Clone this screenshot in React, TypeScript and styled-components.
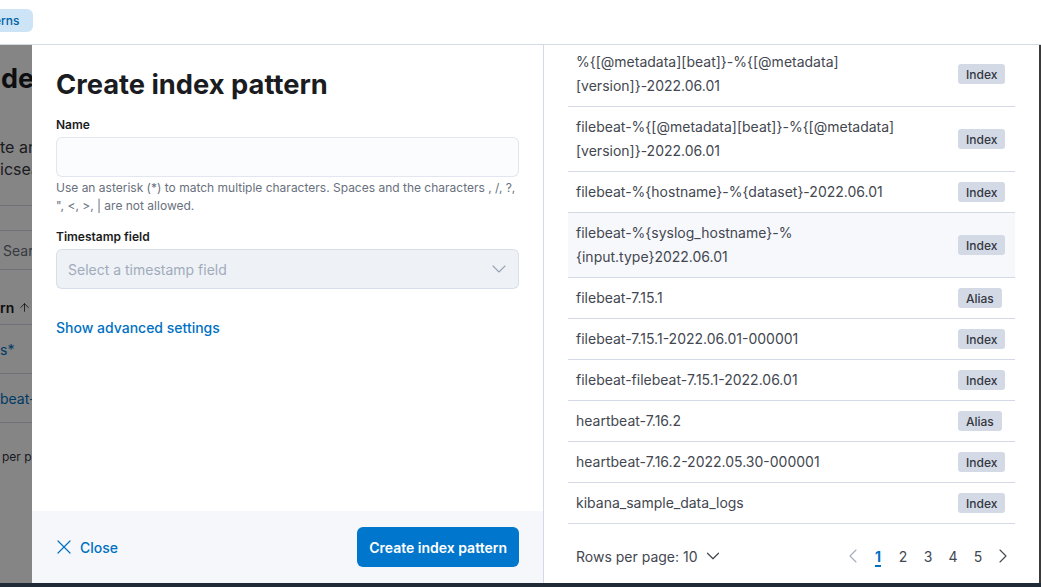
import React from "react";
import styled, { createGlobalStyle } from "styled-components";
import { X, ChevronDown, ChevronLeft, ChevronRight, ArrowUp } from "lucide-react";

const GlobalStyle = createGlobalStyle`
  html, body { margin: 0; padding: 0; height: 100%; }
  body {
    font-family: Inter, "Noto Sans", "Liberation Sans", sans-serif;
    background: #ffffff;
    color: #343741;
    overflow: hidden;
    -webkit-font-smoothing: antialiased;
  }
  #root { height: 100%; }
  * { box-sizing: border-box; }
`;

const Shell = styled.div`
  display: grid;
  grid-template-rows: 45px 1fr 4px;
  height: 100vh;
`;

const Header = styled.header`
  display: flex;
  align-items: center;
  border-bottom: 1px solid #d3dae6;
  background: #ffffff;
  overflow: hidden;
`;

const Crumb = styled.span`
  display: inline-flex;
  align-items: center;
  height: 23px;
  margin-top: -3px;
  margin-left: -6px;
  padding: 0 13px 0 0;
  background: #cce4f5;
  color: #0061a6;
  font-size: 12px;
  font-weight: 500;
  border-radius: 0 6px 6px 0;
`;

const Main = styled.main`
  position: relative;
  overflow: hidden;
`;

const BottomBar = styled.div`
  background: #1f2a36;
`;

/* ---------- page behind the mask ---------- */
const BgPage = styled.div`
  display: flex;
  flex-direction: column;
  width: 32px;
  overflow: hidden;
  white-space: nowrap;
`;

const BgTitle = styled.div`
  margin-top: 14px;
  margin-left: 1px;
  font-size: 27px;
  line-height: 40px;
  font-weight: 700;
  color: #1a1c21;
`;

const BgText = styled.div<{ $first?: boolean }>`
  font-size: 16px;
  line-height: 22px;
  color: #343741;
  margin-top: ${(p) => (p.$first ? "37px" : "0")};
`;

const BgRule = styled.div`
  margin-top: 25px;
  border-top: 1px solid #d3dae6;
`;

const BgSearch = styled.div`
  margin-top: 24px;
  height: 40px;
  border-top: 1px solid #d3dae6;
  border-bottom: 1px solid #d3dae6;
  display: flex;
  align-items: center;
  padding-left: 3px;
  font-size: 14px;
  color: #69707d;
`;

const BgHead = styled.div`
  margin-top: 21px;
  height: 34px;
  display: flex;
  align-items: center;
  gap: 4px;
  font-size: 14px;
  font-weight: 600;
  color: #1a1c21;
  border-bottom: 1px solid #d3dae6;
`;

const BgRow = styled.div`
  height: 49px;
  display: flex;
  align-items: center;
  font-size: 14px;
  color: #0071c2;
  border-bottom: 1px solid #d3dae6;
`;

const BgFoot = styled.div`
  margin-top: 26px;
  font-size: 12px;
  line-height: 16px;
  color: #343741;
  padding-left: 2px;
`;

const Mask = styled.div`
  position: absolute;
  inset: 0;
  background: rgba(0, 0, 0, 0.48);
`;

/* ---------- flyout ---------- */
const Flyout = styled.section`
  position: absolute;
  top: 0;
  bottom: 0;
  left: 32px;
  right: 0;
  display: grid;
  grid-template-columns: 512px 1fr;
  background: #ffffff;
  border-right: 2px solid #3a3a3a;
`;

const LeftPane = styled.div`
  display: flex;
  flex-direction: column;
  border-right: 1px solid #d3dae6;
  min-height: 0;
`;

const Body = styled.div`
  flex: 1;
  display: flex;
  flex-direction: column;
  padding: 20px 24px 0;
`;

const Title = styled.h2`
  margin: 0;
  font-size: 27.3px;
  line-height: 40px;
  font-weight: 700;
  color: #1a1c21;
`;

const Label = styled.label<{ $gap: number }>`
  display: block;
  margin-top: ${(p) => p.$gap}px;
  font-size: 12px;
  line-height: 16px;
  font-weight: 600;
  color: #1a1c21;
`;

const TextInput = styled.input`
  margin-top: 4px;
  height: 40px;
  width: 100%;
  border: none;
  border-radius: 6px;
  background: #fbfcfd;
  box-shadow: inset 0 0 0 1px rgba(17, 43, 134, 0.1);
  padding: 0 12px;
  font: inherit;
  font-size: 14px;
  outline: none;
`;

const Help = styled.div`
  margin-top: 2px;
  font-size: 12px;
  line-height: 18px;
  color: #69707d;
`;

const SelectBox = styled.div`
  margin-top: 4px;
  height: 40px;
  display: flex;
  align-items: center;
  justify-content: space-between;
  padding: 0 8px 0 12px;
  border-radius: 6px;
  background: #eef2f7;
  box-shadow: inset 0 0 0 1px rgba(17, 43, 134, 0.1);
  font-size: 14px;
  color: #a2abba;
`;

const LinkButton = styled.button`
  align-self: flex-start;
  margin-top: 29px;
  padding: 0;
  border: none;
  background: none;
  font: inherit;
  font-size: 14px;
  line-height: 20px;
  font-weight: 500;
  color: #0071c2;
  cursor: pointer;
`;

const Footer = styled.div`
  display: flex;
  align-items: center;
  justify-content: space-between;
  padding: 16px 24px;
  background: #f5f7fa;
`;

const EmptyButton = styled.button`
  display: inline-flex;
  align-items: center;
  gap: 4px;
  height: 40px;
  margin-left: -4px;
  padding: 0;
  border: none;
  background: none;
  font: inherit;
  font-size: 14px;
  font-weight: 500;
  color: #0071c2;
`;

const PrimaryButton = styled.button`
  height: 40px;
  padding: 0 12px;
  border: none;
  border-radius: 6px;
  background: #0077cc;
  color: #ffffff;
  font: inherit;
  font-size: 14px;
  font-weight: 600;
`;

/* ---------- right pane ---------- */
const RightPane = styled.div`
  display: flex;
  flex-direction: column;
  padding: 0 24px;
  overflow: hidden;
  min-height: 0;
`;

const Table = styled.div`
  display: flex;
  flex-direction: column;
  margin-top: -3px;
`;

const Row = styled.div<{ $hover?: boolean }>`
  display: grid;
  grid-template-columns: 1fr 65px;
  align-items: center;
  border-bottom: 1px solid #d3dae6;
  background: ${(p) => (p.$hover ? "#f7f8fc" : "transparent")};
`;

const NameCell = styled.div`
  padding: 8px;
  font-size: 14px;
  line-height: 24px;
  color: #434750;
`;

const TypeCell = styled.div`
  padding: 8px;
  display: flex;
`;

const Badge = styled.span`
  display: inline-flex;
  align-items: center;
  height: 20px;
  padding: 0 8px;
  border-radius: 3px;
  background: #d3dae6;
  color: #343741;
  font-size: 12px;
  font-weight: 500;
`;

const PagerBar = styled.div`
  display: flex;
  align-items: center;
  justify-content: space-between;
  padding: 20px 0 0 8px;
`;

const RowsPer = styled.div`
  display: flex;
  align-items: center;
  gap: 4px;
  height: 24px;
  font-size: 14px;
  color: #434750;
`;

const Pages = styled.div`
  display: flex;
  align-items: center;
  gap: 1px;
`;

const PageItem = styled.span<{ $active?: boolean; $disabled?: boolean }>`
  width: 24px;
  height: 24px;
  display: inline-flex;
  align-items: center;
  justify-content: center;
  font-size: 14px;
  font-weight: ${(p) => (p.$active ? 700 : 400)};
  color: ${(p) => (p.$active ? "#0071c2" : p.$disabled ? "#a2abba" : "#434750")};
  text-decoration: ${(p) => (p.$active ? "underline" : "none")};
  text-decoration-thickness: 1.5px;
  text-underline-offset: 3px;
`;

type Item = { name: React.ReactNode; type: "Index" | "Alias"; hover?: boolean };

const items: Item[] = [
  { name: <>%{"{"}[@metadata][beat]{"}"}-%{"{"}[@metadata]<wbr />[version]{"}"}-2022.06.01</>, type: "Index" },
  { name: <>filebeat-%{"{"}[@metadata][beat]{"}"}-%{"{"}[@metadata]<wbr />[version]{"}"}-2022.06.01</>, type: "Index" },
  { name: "filebeat-%{hostname}-%{dataset}-2022.06.01", type: "Index" },
  { name: <>filebeat-%{"{"}syslog_hostname{"}"}-%<wbr />{"{"}input.type{"}"}2022.06.01</>, type: "Index", hover: true },
  { name: "filebeat-7.15.1", type: "Alias" },
  { name: "filebeat-7.15.1-2022.06.01-000001", type: "Index" },
  { name: "filebeat-filebeat-7.15.1-2022.06.01", type: "Index" },
  { name: "heartbeat-7.16.2", type: "Alias" },
  { name: "heartbeat-7.16.2-2022.05.30-000001", type: "Index" },
  { name: "kibana_sample_data_logs", type: "Index" },
];

export default function App() {
  return (
    <>
      <GlobalStyle />
      <Shell>
        <Header>
          <Crumb>erns</Crumb>
        </Header>
        <Main>
          <BgPage>
            <BgTitle>de</BgTitle>
            <BgText $first>te an</BgText>
            <BgText>icsea</BgText>
            <BgRule />
            <BgSearch>Sear</BgSearch>
            <BgHead>
              rn <ArrowUp size={13} strokeWidth={1.5} />
            </BgHead>
            <BgRow>s*</BgRow>
            <BgRow>beat-</BgRow>
            <BgFoot>per p</BgFoot>
          </BgPage>
          <Mask />
          <Flyout>
            <LeftPane>
              <Body>
                <Title>Create index pattern</Title>
                <Label $gap={12}>Name</Label>
                <TextInput aria-label="Name" />
                <Help>
                  Use an asterisk (*) to match multiple characters. Spaces and the characters , /, ?,
                  <br />
                  ", &lt;, &gt;, | are not allowed.
                </Help>
                <Label $gap={14}>Timestamp field</Label>
                <SelectBox>
                  <span>Select a timestamp field</span>
                  <ChevronDown size={24} strokeWidth={1.1} color="#98a2b3" />
                </SelectBox>
                <LinkButton>Show advanced settings</LinkButton>
              </Body>
              <Footer>
                <EmptyButton>
                  <X size={24} strokeWidth={1.2} />
                  Close
                </EmptyButton>
                <PrimaryButton>Create index pattern</PrimaryButton>
              </Footer>
            </LeftPane>
            <RightPane>
              <Table>
                {items.map((it, i) => (
                  <Row key={i} $hover={it.hover}>
                    <NameCell>{it.name}</NameCell>
                    <TypeCell>
                      <Badge>{it.type}</Badge>
                    </TypeCell>
                  </Row>
                ))}
              </Table>
              <PagerBar>
                <RowsPer>
                  Rows per page: 10
                  <ChevronDown size={22} strokeWidth={1.3} />
                </RowsPer>
                <Pages>
                  <PageItem $disabled>
                    <ChevronLeft size={24} strokeWidth={1.1} />
                  </PageItem>
                  <PageItem $active>1</PageItem>
                  <PageItem>2</PageItem>
                  <PageItem>3</PageItem>
                  <PageItem>4</PageItem>
                  <PageItem>5</PageItem>
                  <PageItem>
                    <ChevronRight size={24} strokeWidth={1.1} />
                  </PageItem>
                </Pages>
              </PagerBar>
            </RightPane>
          </Flyout>
        </Main>
        <BottomBar />
      </Shell>
    </>
  );
}
